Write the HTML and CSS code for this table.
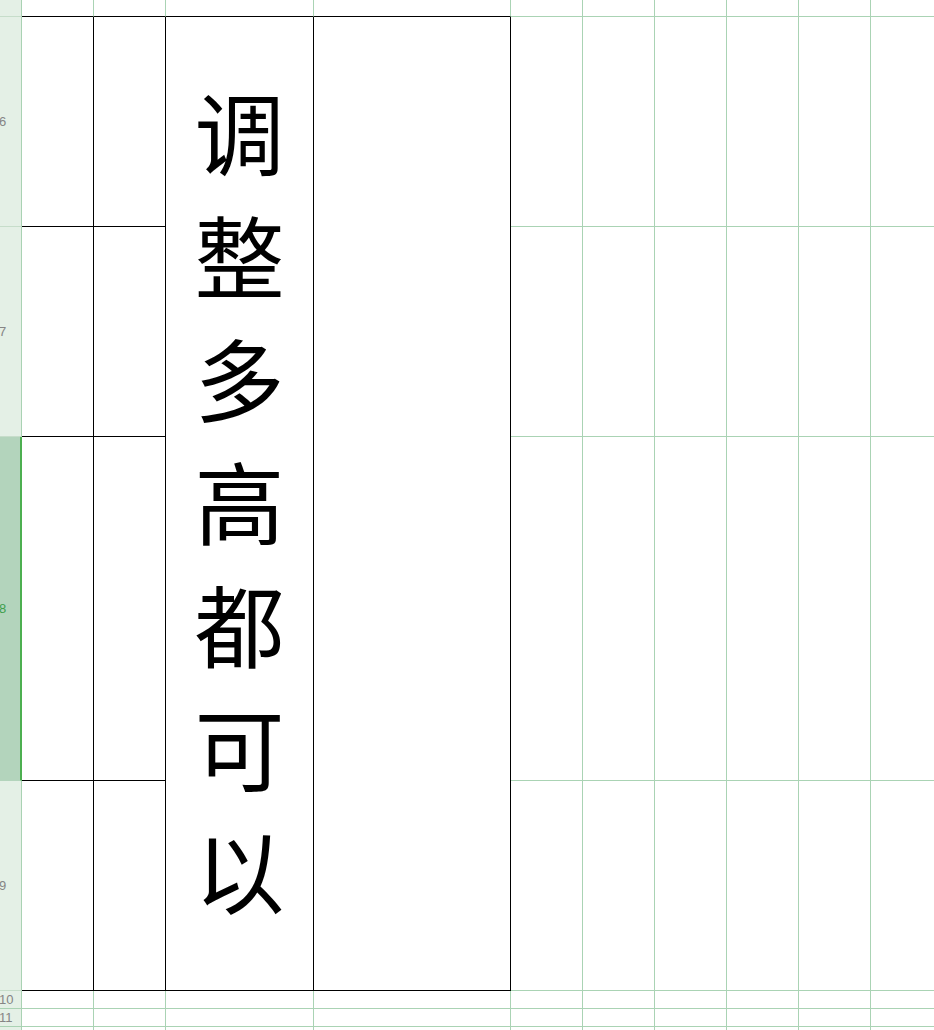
FILE: index.html
```html
<!DOCTYPE html>
<html lang="zh-CN">
<head>
<meta charset="utf-8">
<title>Sheet</title>
<link rel="stylesheet" href="styles.css">
</head>
<body>
<div class="sheet">
  <div class="rowhdr">
    <div class="rh h-top"></div>
    <div class="rh h-tall"><span>6</span></div>
    <div class="rh h-tall"><span>7</span></div>
    <div class="rh h-big sel"><span>8</span></div>
    <div class="rh h-tall"><span>9</span></div>
    <div class="rh h-small"><span>10</span></div>
    <div class="rh h-small"><span>11</span></div>
    <div class="rh h-small"></div>
  </div>
  <div class="grid">
    <!-- row 5 -->
    <div class="c tt"></div><div class="c tt"></div><div class="c tt"></div><div class="c tt"></div>
    <div class="c"></div><div class="c"></div><div class="c"></div><div class="c"></div><div class="c"></div><div class="c"></div>
    <!-- row 6 -->
    <div class="c t"></div><div class="c t"></div>
    <div class="c t merged"><div class="vtext">调整多高都可以</div></div>
    <div class="c t merged"></div>
    <div class="c"></div><div class="c"></div><div class="c"></div><div class="c"></div><div class="c"></div><div class="c"></div>
    <!-- row 7 -->
    <div class="c t"></div><div class="c t"></div>
    <div class="c"></div><div class="c"></div><div class="c"></div><div class="c"></div><div class="c"></div><div class="c"></div>
    <!-- row 8 -->
    <div class="c t"></div><div class="c t"></div>
    <div class="c"></div><div class="c"></div><div class="c"></div><div class="c"></div><div class="c"></div><div class="c"></div>
    <!-- row 9 -->
    <div class="c t"></div><div class="c t"></div>
    <div class="c"></div><div class="c"></div><div class="c"></div><div class="c"></div><div class="c"></div><div class="c"></div>
    <!-- row 10 -->
    <div class="c"></div><div class="c"></div><div class="c"></div><div class="c"></div><div class="c"></div>
    <div class="c"></div><div class="c"></div><div class="c"></div><div class="c"></div><div class="c"></div>
    <!-- row 11 -->
    <div class="c"></div><div class="c"></div><div class="c"></div><div class="c"></div><div class="c"></div>
    <div class="c"></div><div class="c"></div><div class="c"></div><div class="c"></div><div class="c"></div>
    <!-- row 12 -->
    <div class="c"></div><div class="c"></div><div class="c"></div><div class="c"></div><div class="c"></div>
    <div class="c"></div><div class="c"></div><div class="c"></div><div class="c"></div><div class="c"></div>
  </div>
</div>
</body>
</html>
```

FILE: styles.css
```css
html, body {
  margin: 0;
  padding: 0;
  background: #ffffff;
  overflow: hidden;
  width: 934px;
  height: 1030px;
}

.sheet {
  display: flex;
  align-items: flex-start;
  width: 934px;
  height: 1030px;
  overflow: hidden;
}

.rowhdr {
  flex: 0 0 22px;
  width: 22px;
  display: flex;
  flex-direction: column;
  background: #e4f0e6;
}

.rh {
  box-sizing: border-box;
  width: 22px;
  border-right: 1px solid #a9d2b3;
  border-bottom: 1px solid #c6ddca;
  display: flex;
  align-items: center;
  overflow: hidden;
  font-family: "Liberation Sans", Arial, sans-serif;
  font-size: 13px;
  color: #858585;
  line-height: 1;
}

.rh span {
  display: block;
  margin-left: -1px;
  white-space: nowrap;
}

.h-top { height: 17px; }
.h-tall { height: 210px; }
.h-big { height: 344px; }
.h-small { height: 18px; border-bottom-color: #a9d2b3; }

.rh.sel {
  background: #b3d4bc;
  border-right: 2px solid #4caf50;
  border-bottom-color: #b3d4bc;
  color: #3f9f4c;
}

.grid {
  flex: 0 0 auto;
  display: grid;
  grid-template-columns: 72px 72px 148px 197px repeat(6, 72px);
  grid-template-rows: 17px 210px 210px 344px 210px 18px 18px 18px;
}

.c {
  box-sizing: border-box;
  border-right: 1px solid #aad3b4;
  border-bottom: 1px solid #aad3b4;
  background: #ffffff;
}

.c.tt {
  border-bottom-color: #000000;
}

.c.t {
  border-right-color: #000000;
  border-bottom-color: #000000;
}

.c.merged {
  grid-row: span 4;
  display: flex;
  align-items: center;
  justify-content: center;
}

.vtext {
  writing-mode: vertical-rl;
  font-family: "Noto Sans CJK SC", "Noto Sans CJK JP", sans-serif;
  font-weight: 400;
  font-size: 90px;
  line-height: 1;
  letter-spacing: 33px;
  padding-top: 33px;
  color: #000000;
}
```
